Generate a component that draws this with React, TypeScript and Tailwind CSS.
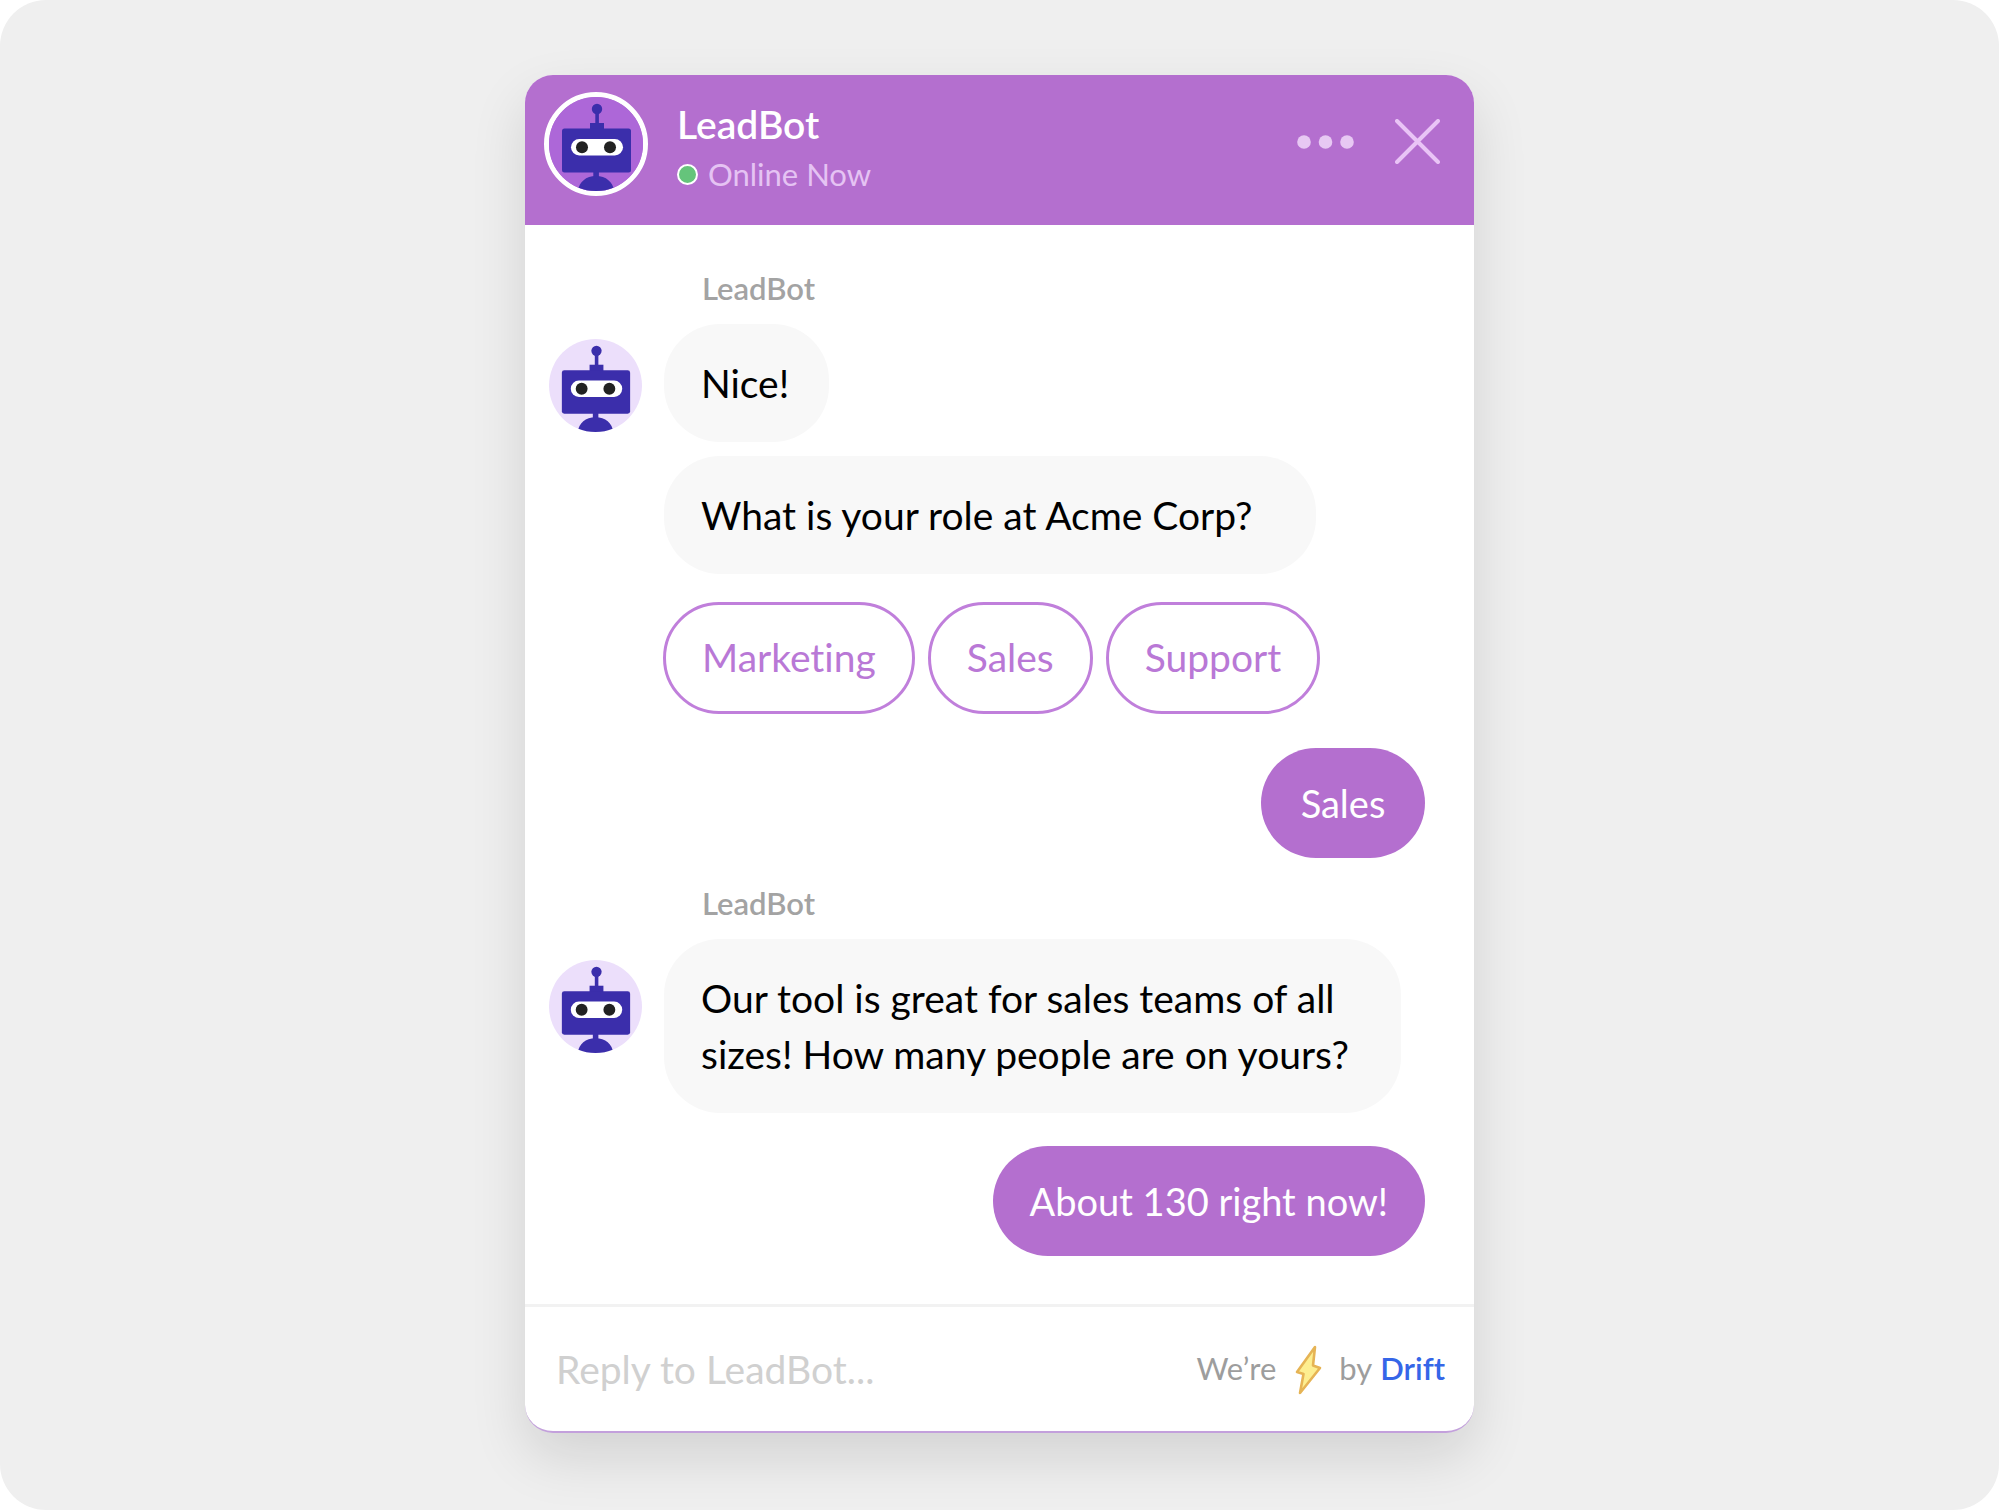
import { useId, type ReactNode } from "react";

function Robot({ background }: { background: string }) {
  const clip = useId();
  return (
    <svg viewBox="0 0 94 94" className="block h-full w-full" aria-hidden="true">
      <clipPath id={clip}>
        <circle cx="47" cy="47" r="47" />
      </clipPath>
      <g clipPath={`url(#${clip})`}>
        <rect width="94" height="94" fill={background} />
        <g fill="#3b2eab">
          <circle cx="48" cy="12" r="5.2" />
          <rect x="46.3" y="14" width="3.6" height="14" />
          <rect x="41" y="26" width="14" height="7" />
          <rect x="13" y="31.5" width="69" height="44" rx="2.5" />
          <rect x="44.3" y="74" width="5.6" height="7" />
          <path d="M29 94c1-9 8-15 18-15s17 6 18 15z" />
        </g>
        <rect x="22" y="42" width="52" height="16.5" rx="8.25" fill="#fff" />
        <circle cx="33" cy="50.3" r="6" fill="#222" />
        <circle cx="61" cy="50.3" r="6" fill="#222" />
      </g>
    </svg>
  );
}

function BotGroup({ gap, children }: { gap: "first" | "later"; children: ReactNode }) {
  return (
    <section className={gap === "first" ? "mt-[42px]" : "mt-6"}>
      <h2 className="ml-[177px] text-[31px] leading-[42px] font-semibold text-[#a3a3a3]">LeadBot</h2>
      <div className="mt-[15px] flex flex-col gap-[14px]">{children}</div>
    </section>
  );
}

function BotMessage({ avatar, size, children }: { avatar?: boolean; size: "short" | "line" | "wide"; children: ReactNode }) {
  return (
    <div className="flex items-start">
      <div className="mr-[22px] ml-6 w-[93px] shrink-0">
        {avatar && (
          <div className={size === "wide" ? "mt-[21px] h-[93px]" : "mt-[15px] h-[93px]"}>
            <Robot background="#ecdffb" />
          </div>
        )}
      </div>
      <p
        className={
          size === "wide"
            ? "max-w-[737px] rounded-[56px] bg-[#f8f8f8] py-[31px] pr-10 pl-[37px] text-black"
            : size === "line"
              ? "rounded-[56px] bg-[#f8f8f8] py-[31px] pr-16 pl-[37px] text-black"
              : "rounded-[56px] bg-[#f8f8f8] py-[31px] pr-10 pl-[37px] text-black"
        }
      >
        {children}
      </p>
    </div>
  );
}

function Reply({ children }: { children: ReactNode }) {
  return (
    <div className="mr-[49px] flex justify-end">
      <p className="min-w-[164px] rounded-[56px] bg-[#b46fcf] px-[37px] py-[27px] text-center text-[38px] leading-[56px] text-white">
        {children}
      </p>
    </div>
  );
}

function Choice({ children }: { children: ReactNode }) {
  return (
    <button type="button" className="rounded-[56px] border-3 border-[#c07fdb] px-9 pt-6 pb-[26px]">
      {children}
    </button>
  );
}

export default function App() {
  return (
    <main className="min-h-screen bg-white font-['Lato',sans-serif] [font-variant-ligatures:none]">
      <div className="min-h-screen rounded-[46px] bg-[#efefef] px-4 pt-[75px] pb-[76px]">
        <article className="mx-auto max-w-[949px] overflow-hidden rounded-[28px] border-b-2 border-[#c3a0dc] bg-white text-[39px] leading-[56px] shadow-[0_24px_56px_rgba(0,0,0,0.12)]">
          <header className="flex h-[150px] items-start bg-[#b46fcf] pt-[17px] pr-[34px] pl-[19px]">
            <div className="h-[104px] w-[104px] shrink-0 rounded-full border-[5px] border-white">
              <Robot background="#ad67d8" />
            </div>
            <div className="ml-[29px] flex-1 pt-[7px]">
              <h1 className="text-[39px] leading-[50px] font-semibold text-white">LeadBot</h1>
              <p className="flex items-center gap-[10px] text-[31px] leading-[50px] text-[#e5c3f3]">
                <span className="h-[21px] w-[21px] rounded-full border-2 border-white bg-[#65c47b]" />
                Online Now
              </p>
            </div>
            <button type="button" aria-label="More options" className="mt-10 mr-[41px]">
              <svg width="57" height="20" viewBox="0 0 57 20" fill="#e7c8f3" aria-hidden="true">
                <circle cx="7" cy="10" r="6.8" />
                <circle cx="28.5" cy="10" r="6.8" />
                <circle cx="50" cy="10" r="6.8" />
              </svg>
            </button>
            <button type="button" aria-label="Close chat" className="mt-[27px]">
              <svg width="45" height="45" viewBox="0 0 45 45" stroke="#e9c4f6" strokeWidth="4" strokeLinecap="round" aria-hidden="true">
                <path d="M2 2l41 41M43 2L2 43" />
              </svg>
            </button>
          </header>

          <BotGroup gap="first">
            <BotMessage avatar size="short">Nice!</BotMessage>
            <BotMessage size="line">What is your role at Acme Corp?</BotMessage>
          </BotGroup>

          <div className="mt-7 ml-[138px] flex flex-wrap gap-[13px] text-[#b978d6]">
            <Choice>Marketing</Choice>
            <Choice>Sales</Choice>
            <Choice>Support</Choice>
          </div>

          <div className="mt-[34px]">
            <Reply>Sales</Reply>
          </div>

          <BotGroup gap="later">
            <BotMessage avatar size="wide">
              Our tool is great for sales teams of all sizes! How many people are on yours?
            </BotMessage>
          </BotGroup>

          <div className="mt-[33px]">
            <Reply>About 130 right now!</Reply>
          </div>

          <footer className="mt-12 flex h-[127px] items-center border-t-3 border-[#f2f2f2] pr-[29px] pl-[31px]">
            <input
              type="text"
              aria-label="Reply to LeadBot"
              placeholder="Reply to LeadBot..."
              className="min-w-0 flex-1 bg-transparent outline-none placeholder:text-[#d0d0d0] placeholder:opacity-100"
            />
            <p className="flex items-center pb-[2px] text-[31px] text-[#9d9d9d]">
              We’re
              <svg width="27" height="54" viewBox="0 0 27 54" className="mr-[17px] ml-[19px]" aria-label="powered" role="img">
                <path d="M20 6L2 31l6.500 2L5 52L25 27l-7-2.500z" fill="#fdee90" stroke="#e6b455" strokeWidth="2.6" strokeLinejoin="round" />
              </svg>
              by
              <a href="#drift" className="ml-2 font-semibold text-[#3566e8]">Drift</a>
            </p>
          </footer>
        </article>
      </div>
    </main>
  );
}
